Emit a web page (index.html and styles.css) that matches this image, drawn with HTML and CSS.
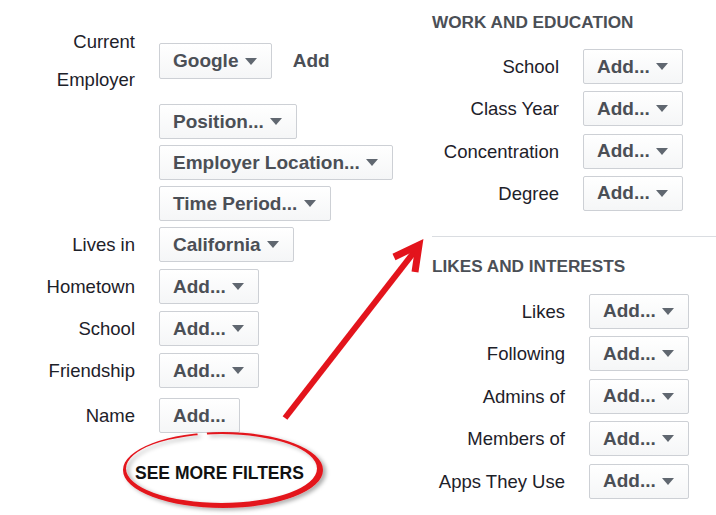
FILE: index.html
```html
<!DOCTYPE html>
<html lang="en">
<head>
  <meta charset="UTF-8" />
  <title>Search Filters</title>
  <link rel="stylesheet" href="styles.css">
</head>
<body>
  <div class="page">
    <section class="basic">
      <div class="field employer">
        <div class="label">Current<br>Employer</div>
        <div class="line">
          <span class="drop">Google <i class="caret"></i></span>
          <span class="add">Add</span>
        </div>
      </div>

      <div class="sub">
        <span class="drop">Position... <i class="caret"></i></span>
        <span class="drop">Employer Location... <i class="caret"></i></span>
        <span class="drop">Time Period... <i class="caret"></i></span>
      </div>

      <div class="rows">
        <div class="field"><div class="label">Lives in</div><div><span class="drop">California <i class="caret"></i></span></div></div>
        <div class="field"><div class="label">Hometown</div><div><span class="drop">Add... <i class="caret"></i></span></div></div>
        <div class="field"><div class="label">School</div><div><span class="drop">Add... <i class="caret"></i></span></div></div>
        <div class="field"><div class="label">Friendship</div><div><span class="drop">Add... <i class="caret"></i></span></div></div>
        <div class="field name"><div class="label">Name</div><div><span class="drop">Add...</span></div></div>
      </div>

      <div class="more">SEE MORE FILTERS</div>
    </section>

    <section class="advanced">
      <h2>WORK AND EDUCATION</h2>
      <div class="rows work">
        <div class="field"><div class="label">School</div><div><span class="drop">Add... <i class="caret"></i></span></div></div>
        <div class="field"><div class="label">Class Year</div><div><span class="drop">Add... <i class="caret"></i></span></div></div>
        <div class="field"><div class="label">Concentration</div><div><span class="drop">Add... <i class="caret"></i></span></div></div>
        <div class="field"><div class="label">Degree</div><div><span class="drop">Add... <i class="caret"></i></span></div></div>
      </div>

      <hr>

      <h2>LIKES AND INTERESTS</h2>
      <div class="rows likes">
        <div class="field"><div class="label">Likes</div><div><span class="drop">Add... <i class="caret"></i></span></div></div>
        <div class="field"><div class="label">Following</div><div><span class="drop">Add... <i class="caret"></i></span></div></div>
        <div class="field"><div class="label">Admins of</div><div><span class="drop">Add... <i class="caret"></i></span></div></div>
        <div class="field"><div class="label">Members of</div><div><span class="drop">Add... <i class="caret"></i></span></div></div>
        <div class="field"><div class="label">Apps They Use</div><div><span class="drop">Add... <i class="caret"></i></span></div></div>
      </div>
    </section>

    <!-- red annotation drawn over the form -->
    <svg class="notes" width="716" height="515" viewBox="0 0 716 515">
      <defs>
        <mask id="gap">
          <rect x="0" y="0" width="716" height="515" fill="#fff"/>
          <polygon points="196,426 206,426 208,442 199,442" fill="#000"/>
        </mask>
        <filter id="shade" x="-10%" y="-20%" width="125%" height="150%">
          <feDropShadow dx="3" dy="2" stdDeviation="2" flood-color="#000" flood-opacity="0.35"/>
        </filter>
      </defs>
      <g filter="url(#shade)">
        <path mask="url(#gap)" fill="#e3141c" fill-rule="evenodd"
          d="M123,470 a100,38 0 1,0 200,0 a100,38 0 1,0 -200,0 Z
             M126,468.5 a95.5,34.5 0 1,0 191,0 a95.5,34.5 0 1,0 -191,0 Z"/>
      </g>
      <line x1="285" y1="418" x2="418" y2="247" stroke="#e3141c" stroke-width="6"/>
      <polyline points="394,257 419,245 415,272" fill="none" stroke="#e3141c" stroke-width="7" stroke-linejoin="miter"/>
    </svg>
  </div>
</body>
</html>
```

FILE: styles.css
```css
body {
  margin: 0;
  background: #ffffff;
  font-family: 'Liberation Sans', Arial, sans-serif;
  color: #1d2129;
}
.page {
  position: relative;
  width: 716px;
  height: 515px;
  display: flex;
  overflow: hidden;
}
.basic {
  width: 432px;
  padding-top: 23px;
}
.advanced {
  flex: 1;
  padding-top: 12px;
}
.field {
  display: grid;
  grid-template-columns: 135px auto;
  column-gap: 24px;
  align-items: center;
}
.label {
  text-align: right;
  font-size: 18.5px;
  line-height: 35px;
}
.employer .label {
  line-height: 38px;
}
.line {
  display: flex;
  align-items: center;
}
.drop {
  display: inline-flex;
  align-items: center;
  box-sizing: border-box;
  height: 35px;
  padding: 0 13px;
  border: 1px solid #cdd0d5;
  border-radius: 2px;
  background: linear-gradient(#ffffff, #f5f6f7);
  color: #4b4f56;
  font-size: 19px;
  font-weight: bold;
  white-space: pre;
}
.employer .drop {
  height: 36px;
}
.caret {
  width: 0;
  height: 0;
  margin-left: 1px;
  margin-right: 1px;
  border-left: 6.5px solid transparent;
  border-right: 6.5px solid transparent;
  border-top: 7px solid #606770;
}
.add {
  margin-left: 21px;
  color: #4b4f56;
  font-size: 19px;
  font-weight: bold;
}
.sub {
  margin: 5px 0 0 159px;
  display: flex;
  flex-direction: column;
  align-items: flex-start;
  gap: 6px;
}
.rows {
  display: flex;
  flex-direction: column;
  gap: 7px;
}
.basic .rows {
  margin-top: 6px;
}
.name {
  margin-top: 3px;
}
.more {
  margin: 30px 0 0 135px;
  font-size: 17.5px;
  line-height: 20px;
  font-weight: bold;
  color: #111111;
}
h2 {
  margin: 0;
  font-size: 17.2px;
  line-height: 20px;
  font-weight: bold;
  color: #4b4f56;
}
.work {
  margin-top: 17px;
  gap: 7.3px;
}
.work .field {
  grid-template-columns: 127px auto;
}
.likes {
  margin-top: 18px;
  gap: 7.5px;
}
.likes .field {
  grid-template-columns: 133px auto;
}
hr {
  margin: 25px 0 19px;
  border: 0;
  border-top: 1px solid #dadde1;
}
.notes {
  position: absolute;
  left: 0;
  top: 0;
  pointer-events: none;
}
```
